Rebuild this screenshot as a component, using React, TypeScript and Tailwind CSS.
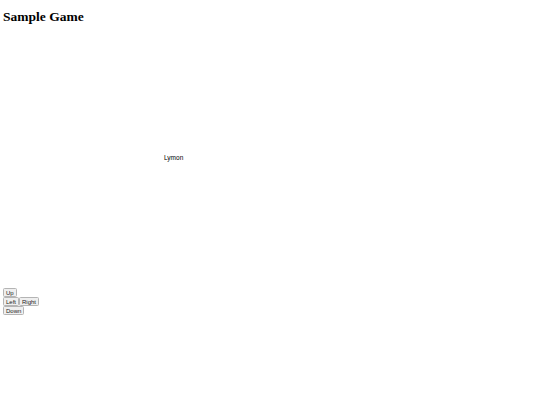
const Btn = ({ label }: { label: string }) => (
  <button className="h-[9px] px-[2px] border border-[#b4b4b4] rounded-[1.5px] bg-[#efefef] text-[6px] leading-none text-[#222] font-['Liberation_Sans',Arial,sans-serif]">
    {label}
  </button>
);

export default function App() {
  return (
    <div className="min-h-[405px] bg-white px-[3px] text-black antialiased">
      <h1 className="pt-[7px] pb-[13px] text-[13.5px] leading-[19px] font-bold font-['Liberation_Serif','Times_New_Roman',serif]">
        Sample Game
      </h1>

      {/* playfield: the player sprite sits at its own coordinates */}
      <div className="relative h-[249px] w-full">
        <span className="absolute left-[161px] top-[116px] text-[6.5px] leading-none font-['Liberation_Sans',Arial,sans-serif]">
          Lymon
        </span>
      </div>

      <div className="flex flex-col items-start">
        <div className="flex">
          <Btn label="Up" />
        </div>
        <div className="flex">
          <Btn label="Left" />
          <Btn label="Right" />
        </div>
        <div className="flex">
          <Btn label="Down" />
        </div>
      </div>
    </div>
  );
}
